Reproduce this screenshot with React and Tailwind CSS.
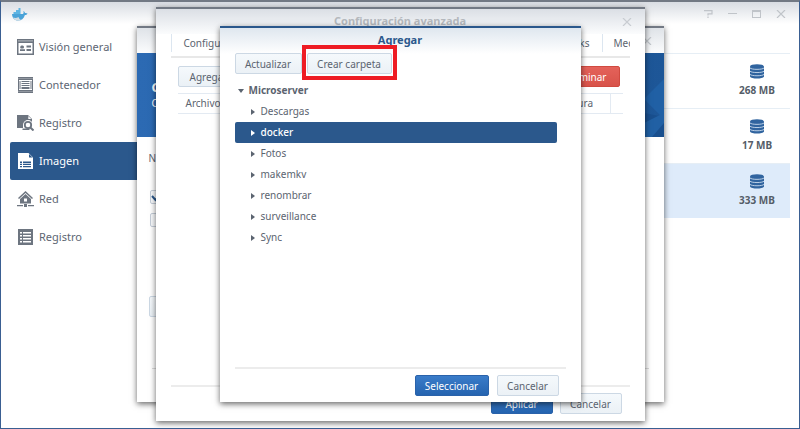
import { useState } from 'react';

const MENU = [
  { id: 'overview', label: 'Visión general', icon: OverviewIcon },
  { id: 'container', label: 'Contenedor', icon: ContainerIcon },
  { id: 'registry', label: 'Registro', icon: RegistryIcon },
  { id: 'image', label: 'Imagen', icon: ImageIcon },
  { id: 'network', label: 'Red', icon: NetworkIcon },
  { id: 'log', label: 'Registro', icon: LogIcon },
];

const IMAGES = [
  { size: '268 MB', selected: false },
  { size: '17 MB', selected: false },
  { size: '333 MB', selected: true },
];

const FOLDERS = ['Descargas', 'docker', 'Fotos', 'makemkv', 'renombrar', 'surveillance', 'Sync'];

function OverviewIcon() {
  return (
    <svg width="17" height="16" viewBox="0 0 17 16" fill="currentColor" aria-hidden="true">
      <path fillRule="evenodd" d="M0 0h17v16H0zM1.5 4v10.500h14V4z" />
      <path d="M3 10.200h5V12H3zM3.800 9.500a1.700 1.700 0 0 1 1-3 1.700 1.700 0 0 1 1.500 3zM9.500 6.500H14v2H9.500zM9.500 10H14v2H9.500z" />
      <path d="M1 1.500h15v.8H1z" fill="#c9ccd1" />
    </svg>
  );
}

function ContainerIcon() {
  return (
    <svg width="17" height="16" viewBox="0 0 17 16" fill="currentColor" aria-hidden="true">
      <path d="M1 0h15v3H1zM1 13h15v3H1zM1 3h1v10H1zM15 3h1v10h-1zM2.500 4h1v8h-1zM13.500 4h1v8h-1z" />
      <path d="M4.500 4h8v1h-8zM4.500 6h8v1h-8zM4.500 8h8v1h-8zM4.500 10h8v2h-8z" />
      <path d="M1 1.200h15v.6H1zM1 14.200h15v.6H1z" fill="#b5b9bf" />
    </svg>
  );
}

function RegistryIcon() {
  return (
    <svg width="17" height="16" viewBox="0 0 17 16" fill="currentColor" aria-hidden="true">
      <path d="M0 0h11l4 4v4l-4-2-5 4v3H0z" />
      <path d="M11.300 1v3h3z" fill="#fff" />
      <circle cx="11" cy="10" r="5" fill="#fff" />
      <circle cx="11" cy="10" r="3.200" fill="none" stroke="currentColor" strokeWidth="1.800" />
      <path d="M13.300 12.500l3.200 3" stroke="currentColor" strokeWidth="2" />
      <path d="M5.500 13.500h7V15h-7z" />
    </svg>
  );
}

function ImageIcon() {
  return (
    <svg width="17" height="16" viewBox="0 0 17 16" fill="currentColor" aria-hidden="true">
      <path d="M1 0h10.500L16 4.500V16H1z" />
      <path d="M12 1v3.500h3.500z" fill="#2b588c" />
      <path d="M3 8.500h2V10H3zM6 8.500h8V10H6zM3 10.800h2v1.300H3zM6 10.800h8v1.300H6zM3 13h2v1.300H3zM6 13h8v1.300H6z" fill="#2b588c" />
    </svg>
  );
}

function NetworkIcon() {
  return (
    <svg width="17" height="16" viewBox="0 0 17 16" fill="currentColor" aria-hidden="true">
      <path d="M8.500 0L16 7l-1 1-6.500-6L2 8 1 7z" />
      <path fillRule="evenodd" d="M8.500 3L14 8v4.500H3V8zM7 7.500v3h3v-3z" />
      <path d="M0 14h6v1.200H0zM11 14h6v1.200h-6zM7 13h3v3H7z" />
    </svg>
  );
}

function LogIcon() {
  return (
    <svg width="17" height="16" viewBox="0 0 17 16" fill="currentColor" aria-hidden="true">
      <path fillRule="evenodd" d="M1 0h15v16H1zM3 3v1.500h2V3zM6 3v1.500h8V3zM3 6v1.500h2V6zM6 6v1.500h8V6zM3 9v1.500h2V9zM6 9v1.500h8V9zM3 12v1.500h2V12zM6 12v1.500h8V12z" />
    </svg>
  );
}

function WhaleIcon() {
  return (
    <svg width="16" height="14" viewBox="0 0 16 14" aria-hidden="true">
      <path d="M0 7h11c.8-.8.800-2 .3-3 .9.300 1.500 1 1.700 2 .9-.2 1.800 0 2.500.4-.5 1-1.500 1.500-2.600 1.500C11.800 11.500 9.300 13.500 6 13.500 2.500 13.500.3 11.300 0 7z" fill="#4aa3d8" />
      <path d="M1.500 5h7v2h-7zM4 3h4.500v2H4zM6.500 1h2v2h-2z" fill="#5db4e2" />
      <path d="M1 10.500c2 .8 4 .5 5.500-.5.500 1.500 1.500 2.500 2.500 3-3.500 1.300-6.500.5-8-2.500z" fill="#d3dde4" />
    </svg>
  );
}

function DiskIcon() {
  return (
    <svg width="14" height="15" viewBox="0 0 14 15" fill="#30649f" aria-hidden="true">
      <ellipse cx="7" cy="2.500" rx="7" ry="2.300" />
      <path d="M0 2.500c1 2 13 2 14 0v10c-1 2.800-13 2.800-14 0z" />
      <path d="M0 4c1.500 1.800 12.500 1.800 14 0M0 7.200c1.500 1.800 12.500 1.800 14 0M0 10.400c1.500 1.800 12.500 1.800 14 0" fill="none" stroke="#dce9f6" strokeWidth=".8" />
    </svg>
  );
}

function HelpIcon() {
  return (
    <svg width="9" height="8" viewBox="0 0 9 8" fill="none" stroke="currentColor" strokeWidth="1.200" aria-hidden="true">
      <path d="M0 .6h8v3.200H4V5.500M4 6.600V8" />
    </svg>
  );
}

function CloseIcon() {
  return (
    <svg width="10" height="8" viewBox="0 0 10 8" fill="none" stroke="currentColor" strokeWidth="1.200" aria-hidden="true">
      <path d="M1 0l8 8M9 0L1 8" />
    </svg>
  );
}

function Button({ variant = 'plain', className = '', children }) {
  const styles = {
    plain: 'border-[#ccd8e4] bg-linear-to-b from-[#f5f9fc] to-[#ebf1f6] text-[#5b6470]',
    primary: 'border-[#2a62aa] bg-linear-to-b from-[#3a7cc9] to-[#2564b0] text-white',
    danger: 'border-[#d04a40] bg-linear-to-b from-[#e4625a] to-[#d8534a] text-white',
  };
  return (
    <button
      type="button"
      className={`h-[21px] shrink-0 rounded-xs border text-[10px] leading-none whitespace-nowrap ${styles[variant]} ${className}`}
    >
      {children}
    </button>
  );
}

function Checkbox({ id, label, defaultChecked = false }) {
  return (
    <span className="relative ml-px flex size-[14px]">
      <input
        id={id}
        type="checkbox"
        aria-label={label}
        defaultChecked={defaultChecked}
        className="peer size-full appearance-none rounded-xs border border-[#c5ced9] bg-[#f8fafc]"
      />
      <svg
        viewBox="0 0 14 14"
        className="pointer-events-none absolute inset-0 hidden peer-checked:block"
        fill="none"
        stroke="#2b588c"
        strokeWidth="2"
        aria-hidden="true"
      >
        <path d="M2 6l3.500 4L12 3" />
      </svg>
    </span>
  );
}

function Sidebar() {
  const [active, setActive] = useState('image');
  return (
    <nav className="flex w-[210px] shrink-0 flex-col pt-1 pl-[9px]">
      {MENU.map(({ id, label, icon: Icon }) => (
        <button
          key={id}
          type="button"
          onClick={() => setActive(id)}
          className={`flex h-[38px] items-center gap-[5px] rounded-xs pl-[7px] text-[11px] ${
            active === id ? 'bg-[#2b588c] text-white' : 'text-[#6d7580]'
          }`}
        >
          <Icon />
          <span className={active === id ? '' : 'text-[#5d6673]'}>{label}</span>
        </button>
      ))}
    </nav>
  );
}

function ImageList() {
  return (
    <ul className="mt-[29px] mr-[9px] flex-1">
      {IMAGES.map((image) => (
        <li
          key={image.size}
          className={`flex h-[55px] flex-col items-end border-t border-[#e6eef5] pt-[10px] pr-3 ${
            image.selected ? 'bg-[#deebfa]' : ''
          }`}
        >
          <div className="flex w-[42px] flex-col items-center gap-[5px]">
            <DiskIcon />
            <span className="text-[10px] leading-3 font-bold whitespace-nowrap text-[#555d68]">
              {image.size}
            </span>
          </div>
        </li>
      ))}
    </ul>
  );
}

function WizardWindow() {
  return (
    <section className="flex h-full w-[527px] flex-col border-t-2 border-[#727984] bg-white shadow-[0_2px_6px_rgba(0,0,0,0.6)]">
      <header className="flex h-[25px] shrink-0 items-center justify-end bg-linear-to-b from-[#dfe3e8] to-[#fbfcfd] pr-3 text-[#c2c6cb]">
        <button type="button" aria-label="Cerrar asistente">
          <CloseIcon />
        </button>
      </header>
      <div className="relative h-[84px] shrink-0 overflow-hidden bg-linear-to-r from-[#2c6ab3] to-[#1d5697] pt-[25px] pl-[15px] text-white">
        <svg className="absolute top-0 right-0 h-full w-10" viewBox="0 0 40 84" aria-hidden="true">
          <path d="M20 46l20-20v40z" fill="#2060a5" />
          <path d="M20 60l20 4v20H20z" fill="#194f8e" />
          <path d="M20 70l20-10v10L28 84h-8z" fill="#2160a4" />
        </svg>
        <h2 className="text-[13px] leading-[18px] font-bold">C</h2>
        <p className="text-[10px] leading-[14px]">C</p>
      </div>
      <div className="flex flex-1 flex-col pl-3 text-[10px] text-[#5b6470]">
        <label htmlFor="enabled" className="mt-[15px] leading-3">
          N
        </label>
        <div className="mt-[26px] flex flex-col gap-[9px]">
          <Checkbox id="enabled" defaultChecked />
          <Checkbox label="Opción 2" />
        </div>
        <Button className="mt-[69px] w-20">{' '}</Button>
        <div className="mt-auto mr-[15px] mb-[33px] ml-[3px] border-t border-[#dcdcdc]" />
      </div>
    </section>
  );
}

function AdvancedWindow() {
  return (
    <section className="flex h-full w-[489px] flex-col border-t-2 border-[#727984] bg-white px-[15px] pb-[7px] shadow-[0_2px_6px_rgba(0,0,0,0.6)]">
      <header className="-mx-[15px] flex h-[25px] shrink-0 items-center bg-linear-to-b from-[#dbdfe5] to-[#fbfcfd] pr-[13px] pl-[23px] text-[#b4b8bd]">
        <h2 className="flex-1 text-center text-[11px] font-bold">Configuración avanzada</h2>
        <button type="button" aria-label="Cerrar configuración avanzada" className="text-[#c8ccd1]">
          <CloseIcon />
        </button>
      </header>
      <div className="flex h-[24px] shrink-0 items-start justify-between border-b-2 border-[#e8e8e8] text-[10px] leading-[18px] whitespace-nowrap text-[#5b6470]">
        <button type="button" className="border-l border-[#dce6f0] pl-3">
          Configuración
        </button>
        <div className="flex items-start">
          <button type="button">Links</button>
          <button type="button" className="ml-3 w-[28px] overflow-hidden border-l border-[#dce6f0] pl-[11px] text-left">
            Med
          </button>
        </div>
      </div>
      <div className="mt-2 flex justify-between pr-[10px] pl-[7px]">
        <Button className="w-[100px] pl-[11px] text-left">Agregar archivo</Button>
        <Button variant="danger" className="w-[60px] pr-3 text-right">
          Eliminar
        </Button>
      </div>
      <table className="mx-[7px] mt-[6px] border-y border-[#e3eaf2] text-[10px] text-[#5b6470]">
        <thead>
          <tr className="h-5">
            <th className="pl-2 text-left font-normal">Archivo/Carpeta</th>
            <th className="w-[100px] border-r border-[#e3eaf2] pr-[17px] text-right font-normal">
              Solo lectura
            </th>
            <th className="w-3" />
          </tr>
        </thead>
      </table>
      <footer className="mt-auto flex justify-end gap-[7px] border-t-2 border-[#ececec] pt-[6px] pr-2">
        <Button variant="primary" className="w-[62px]">
          Aplicar
        </Button>
        <Button className="w-[62px]">Cancelar</Button>
      </footer>
    </section>
  );
}

function FolderTree() {
  const [selected, setSelected] = useState('docker');
  return (
    <div className="mt-[6px] pr-[9px] text-[10px] text-[#5b6470]">
      <div className="flex h-[21px] items-center gap-[5px] pl-[3px] font-bold">
        <span className="border-x-[3px] border-t-4 border-x-transparent border-t-current" />
        Microserver
      </div>
      <ul>
        {FOLDERS.map((name) => (
          <li key={name}>
            <button
              type="button"
              onClick={() => setSelected(name)}
              className={`flex h-[21px] w-full items-center gap-[6px] rounded-xs pl-4 ${
                selected === name ? 'bg-[#2b588c] font-medium text-white' : ''
              }`}
            >
              <span className="border-y-[3px] border-l-4 border-y-transparent border-l-current" />
              {name}
            </button>
          </li>
        ))}
      </ul>
    </div>
  );
}

function AddWindow() {
  return (
    <section className="flex h-full w-[361px] flex-col border-t-2 border-[#2b588c] bg-linear-to-b from-[#dfe7ef] to-white to-[26px] px-[15px] pb-[6px] shadow-[0_2px_6px_rgba(0,0,0,0.6)]">
      <h2 className="h-[25px] text-center text-[11px] leading-6 font-bold text-[#2b588c]">
        Agregar
      </h2>
      <div className="flex gap-[5px]">
        <Button className="w-[67px]">Actualizar</Button>
        <div className="relative flex">
          <Button className="w-[85px]">Crear carpeta</Button>
          <span className="absolute -inset-x-[5px] -top-[8px] -bottom-[6px] border-4 border-[#ee1c24]" />
        </div>
      </div>
      <FolderTree />
      <footer className="mt-auto flex justify-end gap-2 border-t-2 border-[#ececec] pt-[6px] pr-[7px]">
        <Button variant="primary" className="w-[74px]">
          Seleccionar
        </Button>
        <Button className="w-[62px]">Cancelar</Button>
      </footer>
    </section>
  );
}

export default function App() {
  return (
    <div className="relative flex h-screen flex-col overflow-hidden border border-t-2 border-[#3a5f92] border-t-[#727984] bg-white font-['Noto_Sans',sans-serif]">
      <header className="flex h-[22px] shrink-0 items-center justify-between bg-linear-to-b from-[#d9dde3] to-white pt-px pr-[13px] pl-[11px] text-[#c0c4c9]">
        <WhaleIcon />
        <div className="flex items-center gap-[15px]">
          <button type="button" aria-label="Ayuda">
            <HelpIcon />
          </button>
          <button type="button" aria-label="Minimizar" className="h-px w-[9px] bg-current" />
          <button type="button" aria-label="Maximizar" className="h-2 w-[9px] border border-t-2 border-current" />
          <button type="button" aria-label="Cerrar">
            <CloseIcon />
          </button>
        </div>
      </header>
      <main className="flex flex-1">
        <Sidebar />
        <ImageList />
      </main>
      <div className="absolute inset-x-0 top-6 bottom-[26px] flex justify-center">
        <WizardWindow />
      </div>
      <div className="absolute inset-x-0 top-[5px] bottom-[7px] flex justify-center">
        <AdvancedWindow />
      </div>
      <div className="absolute inset-x-0 top-6 bottom-[26px] flex justify-center">
        <AddWindow />
      </div>
    </div>
  );
}
